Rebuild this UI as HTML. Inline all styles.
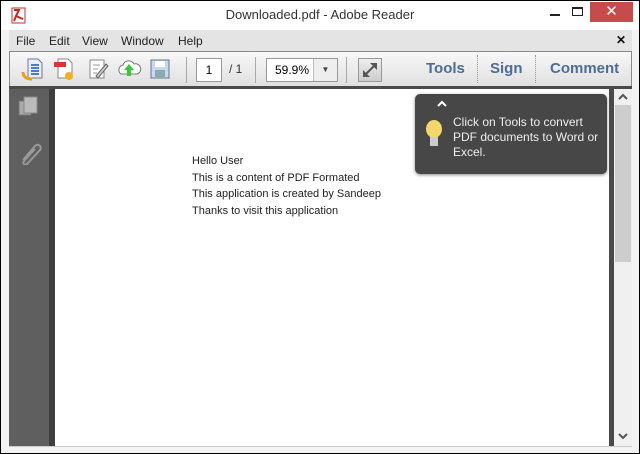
<!DOCTYPE html>
<html><head><meta charset="utf-8"><style>
*{margin:0;padding:0;box-sizing:border-box}
body{width:640px;height:454px;overflow:hidden;background:#000;font-family:"Liberation Sans",sans-serif;position:relative}
.a{position:absolute}
</style></head><body>
<div class="a" style="left:1px;top:1px;width:638px;height:452px;background:#f3f3f3"></div>
<div class="a" style="left:1px;top:1px;width:638px;height:29px;background:#fff"></div>
<svg class="a" style="left:10px;top:6px" width="18" height="18"><rect x="2" y="2" width="13" height="15" fill="#fff" stroke="#b33"/><path d="M4 4h5l-3 6 7 3M6 10l-2 5" stroke="#c22" stroke-width="2" fill="none"/></svg>
<div class="a" style="left:0;width:640px;top:7px;text-align:center;font-size:13px;color:#333">Downloaded.pdf - Adobe Reader</div>
<div class="a" style="left:550px;top:14px;width:10px;height:2px;background:#222"></div>
<div class="a" style="left:572px;top:7px;width:11px;height:9px;border:1px solid #222;border-top-width:2px"></div>
<div class="a" style="left:590px;top:2px;width:43px;height:20px;background:#c74b4b;color:#fff;font-size:15px;text-align:center;line-height:20px">✕</div>
<div class="a" style="left:9px;top:30px;width:623px;height:21px;background:#e4e4e4"></div>
<div class="a" style="left:16px;top:34px;font-size:12px;color:#222">File</div>
<div class="a" style="left:49px;top:34px;font-size:12px;color:#222">Edit</div>
<div class="a" style="left:82px;top:34px;font-size:12px;color:#222">View</div>
<div class="a" style="left:121px;top:34px;font-size:12px;color:#222">Window</div>
<div class="a" style="left:178px;top:34px;font-size:12px;color:#222">Help</div>
<div class="a" style="left:616px;top:33px;font-size:12px;font-weight:bold;color:#111">✕</div>
<div class="a" style="left:9px;top:51px;width:623px;height:36px;border:1px solid #8a8a8a;background:linear-gradient(#f8f8f8,#e0e0e0)"></div>
<div class="a" style="left:9px;top:86px;width:623px;height:3px;background:#4a4a4a"></div>
<svg class="a" style="left:20px;top:56px" width="160" height="28">
<path d="M8 3h10l4 4v15H8z" fill="#e8eefa" stroke="#778"/><path d="M11 9h8M11 12h8M11 15h8M11 18h8" stroke="#4a7bd0" stroke-width="2"/><path d="M3 16q0 7 9 7" stroke="#e8a020" stroke-width="3" fill="none"/>
<path d="M38 3h10l4 4v15H38z" fill="#fff" stroke="#888"/><rect x="34" y="6" width="12" height="5" fill="#d33"/><circle cx="49" cy="20" r="4" fill="#f0b020"/>
<path d="M70 4h14v18H70z" fill="#fff" stroke="#888"/><path d="M73 9h7M73 13h5M73 17h4" stroke="#999"/><path d="M76 20l10-12 2 2-10 12z" fill="#ccc" stroke="#666"/>
<path d="M101 18a5 5 0 0 1 2-9 6 6 0 0 1 11-1 5 5 0 0 1 3 10z" fill="#fff" stroke="#777"/><path d="M109 8l-5 6h3v6h4v-6h3z" fill="#3c3"/>
<rect x="131" y="4" width="18" height="18" fill="#c8d8f0" stroke="#678"/><rect x="135" y="5" width="10" height="6" fill="#fff"/><rect x="135" y="14" width="10" height="7" fill="#8aa"/>
</svg>
<div class="a" style="left:186px;top:57px;width:1px;height:26px;background:#aaa"></div>
<div class="a" style="left:196px;top:58px;width:26px;height:24px;background:#fff;border:1px solid #999;font-size:12px;text-align:center;line-height:22px">1</div>
<div class="a" style="left:229px;top:62px;font-size:12px;color:#333">/ 1</div>
<div class="a" style="left:255px;top:57px;width:1px;height:26px;background:#aaa"></div>
<div class="a" style="left:266px;top:58px;width:72px;height:24px;background:#fff;border:1px solid #999;font-size:12px;line-height:22px;padding-left:8px">59.9%</div>
<div class="a" style="left:313px;top:59px;width:24px;height:22px;border-left:1px solid #bbb;background:#eee;font-size:8px;text-align:center;line-height:22px;color:#444">▼</div>
<div class="a" style="left:346px;top:57px;width:1px;height:26px;background:#aaa"></div>
<div class="a" style="left:358px;top:58px;width:24px;height:24px;border:1px solid #999;background:linear-gradient(#eee,#ccc)"></div>
<svg class="a" style="left:359px;top:59px" width="22" height="22"><path d="M5 17l6-6M17 5l-6 6" stroke="#555" stroke-width="2"/><path d="M4 11v7h7zM18 11V4h-7z" fill="#555"/></svg>
<div class="a" style="left:426px;top:60px;font-size:15px;font-weight:bold;color:#4d6c96">Tools</div>
<div class="a" style="left:477px;top:55px;width:1px;height:28px;border-left:1px dotted #999"></div>
<div class="a" style="left:490px;top:60px;font-size:15px;font-weight:bold;color:#4d6c96">Sign</div>
<div class="a" style="left:535px;top:55px;width:1px;height:28px;border-left:1px dotted #999"></div>
<div class="a" style="left:550px;top:60px;font-size:15px;font-weight:bold;color:#4d6c96">Comment</div>
<div class="a" style="left:9px;top:89px;width:41px;height:357px;background:#5f5f5f"></div>
<div class="a" style="left:49px;top:89px;width:6px;height:357px;background:#3e3e3e"></div>
<svg class="a" style="left:15px;top:95px" width="30" height="70"><rect x="4" y="6" width="12" height="14" fill="#aaa" stroke="#777"/><rect x="9" y="2" width="13" height="16" fill="#bbb" stroke="#888"/><path d="M8 65l12-14a3 3 0 0 1 5 4l-13 14a2 2 0 0 1-3-3l11-12" stroke="#999" stroke-width="2" fill="none"/></svg>
<div class="a" style="left:55px;top:89px;width:557px;height:357px;background:#fff"></div>
<div class="a" style="left:609px;top:89px;width:5px;height:357px;background:#4a4a4a"></div>
<div class="a" style="left:614px;top:89px;width:18px;height:357px;background:#f0f0f0"></div>
<div class="a" style="left:615px;top:105px;width:16px;height:157px;background:#cdcdcd"></div>
<svg class="a" style="left:614px;top:89px" width="18" height="357"><path d="M5 10l4-4 4 4M5 345l4 4 4-4" stroke="#555" stroke-width="2" fill="none"/></svg>
<div class="a" style="left:9px;top:446px;width:623px;height:1px;background:#ccc"></div>
<div class="a" style="left:192px;top:153px;font-size:11px;line-height:16.5px;color:#222">Hello User<br>This is a content of PDF Formated<br>This application is created by Sandeep<br>Thanks to visit this application</div>
<div class="a" style="left:415px;top:94px;width:192px;height:80px;background:#474747;border-radius:5px;box-shadow:0 1px 3px #888"></div>
<svg class="a" style="left:436px;top:100px" width="12" height="8"><path d="M2 6l4-4 4 4" stroke="#fff" stroke-width="2" fill="none"/></svg>
<svg class="a" style="left:424px;top:120px" width="20" height="30"><ellipse cx="10" cy="9" rx="8" ry="9" fill="#f5d66a"/><rect x="6" y="17" width="8" height="9" fill="#ccc"/></svg>
<div class="a" style="left:453px;top:115px;font-size:12px;line-height:15px;color:#eee">Click on Tools to convert<br>PDF documents to Word or<br>Excel.</div>
</body></html>
